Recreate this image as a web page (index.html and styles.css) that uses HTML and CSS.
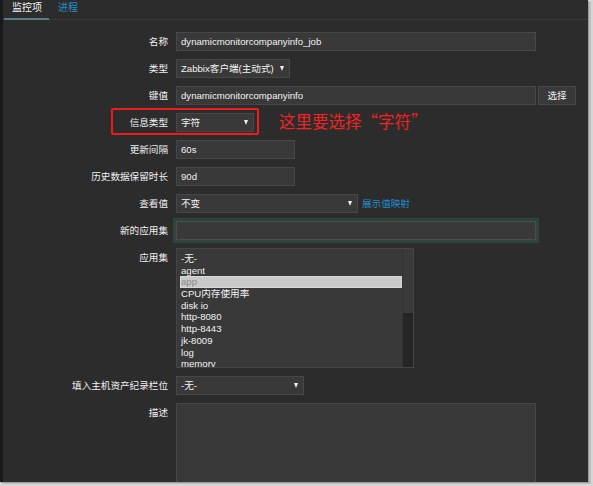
FILE: index.html
```html
<!DOCTYPE html>
<html lang="zh">
<head>
<meta charset="utf-8">
<title>监控项</title>
<link rel="stylesheet" href="styles.css">
</head>
<body>
<div class="frame">
  <div class="tabs">
    <span class="tab active">监控项</span>
    <span class="tab link">进程</span>
  </div>
  <div class="form">
    <div class="lbl">名称</div>
    <div class="ctl"><div class="field w360">dynamicmonitorcompanyinfo_job</div></div>

    <div class="lbl">类型</div>
    <div class="ctl"><div class="field select w114"><span>Zabbix客户端(主动式)</span><span class="arrow"></span></div></div>

    <div class="lbl">键值</div>
    <div class="ctl"><div class="field w360">dynamicmonitorcompanyinfo</div><div class="btn">选择</div></div>

    <div class="lbl">信息类型</div>
    <div class="ctl"><div class="field select w78"><span>字符</span><span class="arrow"></span></div></div>

    <div class="lbl">更新间隔</div>
    <div class="ctl"><div class="field w119">60s</div></div>

    <div class="lbl">历史数据保留时长</div>
    <div class="ctl"><div class="field w119">90d</div></div>

    <div class="lbl">查看值</div>
    <div class="ctl"><div class="field select w182"><span>不变</span><span class="arrow"></span></div><span class="link maplink">展示值映射</span></div>

    <div class="lbl">新的应用集</div>
    <div class="ctl"><div class="field w360 focus"></div></div>

    <div class="lbl">应用集</div>
    <div class="ctl">
      <div class="listbox">
        <div class="items">
          <div class="item">-无-</div>
          <div class="item">agent</div>
          <div class="item sel">app</div>
          <div class="item">CPU内存使用率</div>
          <div class="item">disk io</div>
          <div class="item">http-8080</div>
          <div class="item">http-8443</div>
          <div class="item">jk-8009</div>
          <div class="item">log</div>
          <div class="item">memory</div>
        </div>
        <div class="scroll"><div class="thumb"></div></div>
      </div>
    </div>

    <div class="lbl">填入主机资产纪录栏位</div>
    <div class="ctl"><div class="field select w128"><span>-无-</span><span class="arrow"></span></div></div>

    <div class="lbl">描述</div>
    <div class="ctl"><div class="field w360 textarea"></div></div>
  </div>
  <div class="annot-box"></div>
  <div class="annot-text">这里要选择“字符”</div>
</div>
</body>
</html>
```
FILE: styles.css
```css
html, body {
  margin: 0;
  padding: 0;
}
body {
  background: #d6d6d6;
  font-family: "Liberation Sans", "Noto Sans CJK SC", Arial, sans-serif;
  font-size: 9.6px;
  color: #f0f0f0;
  width: 593px;
  height: 486px;
  overflow: hidden;
}
.frame {
  position: relative;
  width: 585px;
  height: 482px;
  border-left: 3px solid #161a1d;
  background: #2c2c2c;
  overflow: hidden;
  box-shadow: 1px 1px 0 #9c9c9c, 3px 2px 0 #bdbdbd;
}
.tabs {
  display: flex;
  height: 19px;
  border-bottom: 1px solid #3a3a3a;
  padding-left: 1px;
}
.tab {
  box-sizing: border-box;
  height: 20px;
  line-height: 15px;
  padding: 0 8px;
  font-size: 10px;
}
.tab.active {
  color: #f4f4f4;
  border-bottom: 2px solid #5b7b87;
  padding: 0 7px 0 8px;
}
.tab.link {
  margin-left: 1px;
}
.link {
  color: #1f8ecd;
}
.form {
  display: grid;
  grid-template-columns: 165px auto;
  column-gap: 8px;
  row-gap: 8px;
  padding-top: 12px;
}
.lbl {
  text-align: right;
  line-height: 19px;
  white-space: nowrap;
  color: #f0f0f0;
}
.ctl {
  display: flex;
  align-items: center;
}
.field {
  box-sizing: border-box;
  height: 19px;
  line-height: 17px;
  background: #393939;
  border: 1px solid #474747;
  padding: 0 4px;
  color: #f2f2f2;
  white-space: nowrap;
  overflow: hidden;
}
.select {
  display: flex;
  justify-content: space-between;
  align-items: center;
  padding-right: 5px;
}
.arrow {
  width: 0;
  height: 0;
  border-left: 2.5px solid transparent;
  border-right: 2.5px solid transparent;
  border-top: 5px solid #f0f0f0;
}
.w360 { width: 360px; }
.w114 { width: 114px; }
.w78 { width: 78px; }
.w119 { width: 119px; }
.w182 { width: 182px; }
.w128 { width: 128px; }
.btn {
  box-sizing: border-box;
  margin-left: 2px;
  width: 38px;
  height: 19px;
  line-height: 17px;
  text-align: center;
  background: #393939;
  border: 1px solid #474747;
  color: #f0f0f0;
}
.maplink {
  margin-left: 4px;
  line-height: 19px;
}
.focus {
  border-color: #4d4d4d;
  box-shadow: 0 0 0 3px #2d4538;
}
.listbox {
  box-sizing: border-box;
  width: 238px;
  height: 120px;
  background: #393939;
  border: 1px solid #454545;
  display: flex;
  overflow: hidden;
}
.items {
  flex: 1;
  padding: 4px 0 0 3px;
  overflow: hidden;
}
.item {
  height: 11.7px;
  line-height: 11.7px;
  padding-left: 1px;
  white-space: nowrap;
  color: #f2f2f2;
}
.item.sel {
  background: #c9c9c9;
  color: #8a8a8a;
  box-shadow: inset 0 0 0 1px #d8d8d8;
}
.scroll {
  width: 10px;
  border-left: 1px solid #333333;
  background: #3a3a3a;
  display: flex;
  flex-direction: column;
  justify-content: flex-end;
}
.thumb {
  height: 54px;
  background: #252525;
}
.textarea {
  height: 90px;
}
.annot-box {
  position: absolute;
  left: 108px;
  top: 108px;
  width: 144px;
  height: 23px;
  border: 2px solid #ee1c1c;
  border-radius: 2px;
}
.annot-text {
  position: absolute;
  left: 276px;
  top: 111px;
  font-family: "Noto Sans CJK SC", sans-serif;
  font-size: 16.5px;
  line-height: 20px;
  color: #f02222;
  white-space: nowrap;
}
```
